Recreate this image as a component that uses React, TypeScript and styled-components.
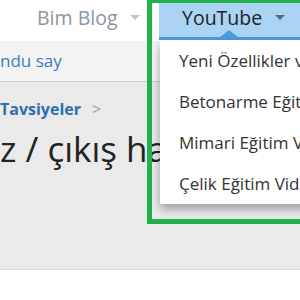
import React from "react";
import styled, { createGlobalStyle } from "styled-components";

const GlobalStyle = createGlobalStyle`
    html, body {
        margin: 0;
        padding: 0;
        background: #ffffff;
        overflow: hidden;
    }
    body {
        font-family: "Open Sans", "Noto Sans", sans-serif;
    }
`

const Page = styled.div`
    position: relative;
    width: 300px;
    height: 300px;
    overflow: hidden;
`

const NavBar = styled.div`
    display: flex;
    height: 41px;
    padding-left: 14px;
    background: #ffffff;
`

const NavItem = styled.div<{ $active?: boolean; $width: number }>`
    position: relative;
    flex: none;
    display: flex;
    align-items: flex-start;
    gap: 13px;
    width: ${p => p.$width}px;
    height: 40px;
    padding: 4px 0 0 23px;
    box-sizing: border-box;
    font-size: 19.5px;
    line-height: 27px;
    white-space: nowrap;
    color: ${p => (p.$active ? "#1f2327" : "#8c96a0")};
    background: ${p => (p.$active ? "#aad3f4" : "transparent")};
    border-bottom: 3px solid ${p => (p.$active ? "#4b9be0" : "transparent")};
`

const Caret = styled.span<{ $dark?: boolean }>`
    width: 0;
    height: 0;
    margin-top: 11px;
    border-left: 5px solid transparent;
    border-right: 5px solid transparent;
    border-top: 5px solid ${p => (p.$dark ? "#5c6b78" : "#c3c6c9")};
`

const Pointer = styled.span`
    position: absolute;
    left: 70px;
    bottom: 0;
    margin-left: -9px;
    width: 0;
    height: 0;
    border-left: 9px solid transparent;
    border-right: 9px solid transparent;
    border-bottom: 7px solid #4b9be0;
`

const Dropdown = styled.div`
    position: absolute;
    top: calc(100% + 3px);
    left: 1px;
    width: 190px;
    background: #ffffff;
    box-shadow: 0 5px 9px rgba(0, 0, 0, 0.33);
    z-index: 2;
`

const DropItem = styled.div`
    height: 41px;
    padding-left: 19px;
    font-size: 17px;
    line-height: 41px;
    color: #333333;
    white-space: nowrap;
`

const SubBar = styled.div`
    height: 40px;
    background: #f3f3f3;
    border-bottom: 1px solid #cfcfcf;
`

const SubLink = styled.a`
    display: block;
    font-size: 17px;
    line-height: 40px;
    color: #3a7cc0;
    white-space: nowrap;
`

const Content = styled.div`
    height: 188px;
    box-sizing: border-box;
    padding-top: 17px;
    background: #eaeaea;
    border-bottom: 1px solid #dcdcdc;
`

const Crumbs = styled.div`
    display: flex;
    align-items: center;
    gap: 11px;
    font-size: 16px;
    line-height: 21px;
    font-weight: 700;
    color: #2f6fae;
`

const CrumbSep = styled.span`
    font-weight: 400;
    color: #a0a0a0;
`

const Heading = styled.h1`
    margin: 8px 0 0 0;
    font-size: 35px;
    line-height: 42px;
    font-weight: 400;
    color: #222222;
    white-space: nowrap;
`

const Highlight = styled.div`
    position: absolute;
    left: 147px;
    top: -2px;
    width: 200px;
    height: 226px;
    box-sizing: border-box;
    border: 5px solid #22b14c;
    pointer-events: none;
    z-index: 3;
`

const App: React.FC = () => {
    return (
        <Page>
            <GlobalStyle />
            <NavBar>
                <NavItem $width={145}>
                    Bim Blog
                    <Caret />
                </NavItem>
                <NavItem $active $width={141}>
                    YouTube
                    <Caret $dark />
                    <Pointer />
                    <Dropdown>
                        <DropItem>Yeni Özellikler ve Yenilikler</DropItem>
                        <DropItem>Betonarme Eğitim Videoları</DropItem>
                        <DropItem>Mimari Eğitim Videoları</DropItem>
                        <DropItem>Çelik Eğitim Videoları</DropItem>
                    </Dropdown>
                </NavItem>
            </NavBar>
            <SubBar>
                <SubLink>ndu say</SubLink>
            </SubBar>
            <Content>
                <Crumbs>
                    Tavsiyeler
                    <CrumbSep>&gt;</CrumbSep>
                </Crumbs>
                <Heading>z / çıkış hatası</Heading>
            </Content>
            <Highlight />
        </Page>
    )
}

export default App
